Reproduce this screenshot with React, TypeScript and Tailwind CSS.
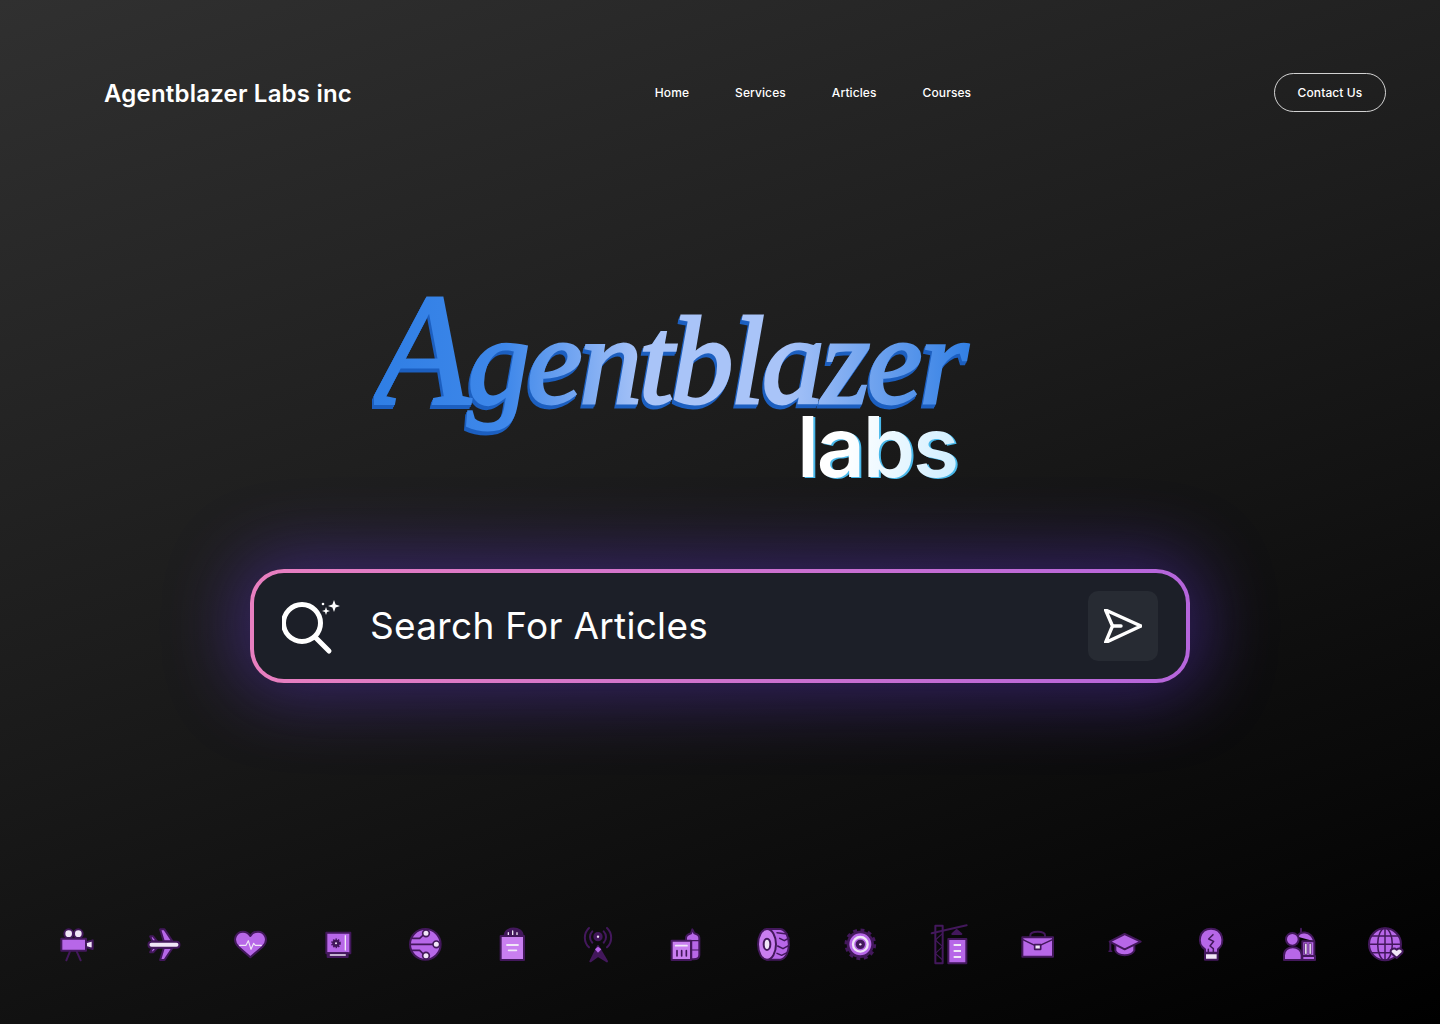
import type { ReactNode } from 'react';

const PURPLE = '#b767e8';
const LIGHT = '#c97ff0';
const DARK = '#43185c';
const WHITE = '#f0e6f7';

function Glyph({ x, children }: { x: number; children: ReactNode }) {
  return (
    <svg
      width="34"
      height="34"
      viewBox={`${x} 54 102 102`}
      fill={PURPLE}
      stroke={DARK}
      strokeWidth="6"
      strokeLinejoin="round"
      strokeLinecap="round"
      className="shrink-0 overflow-visible"
    >
      {children}
    </svg>
  );
}

const icons: ReactNode[] = [
  <Glyph x={60} key="camera">
    <circle cx="86" cy="71" r="13" fill={WHITE} />
    <circle cx="115" cy="71" r="13" fill={WHITE} />
    <rect x="64" y="86" width="74" height="36" />
    <path d="M138 97 L158 91 V117 L138 111 Z" fill={WHITE} />
    <path d="M90 124 L79 151 M110 124 L122 151" fill="none" />
  </Glyph>,
  <Glyph x={321.6} key="plane">
    <path d="M361 58 L374 58 L398 94 H372 Z" />
    <path d="M372 114 H398 L374 150 L361 150 Z" />
    <path d="M331 79 L340 79 L352 94 H338 Z" />
    <path d="M338 114 H352 L340 127 L331 127 Z" />
    <rect x="326" y="95" width="93" height="18" rx="9" fill={WHITE} />
  </Glyph>,
  <Glyph x={583} key="heart">
    <path d="M632 142 L596 110 C576 90 590 65 610 65 C621 65 628 71 632 78 C636 71 644 65 655 65 C675 65 689 90 669 110 Z" />
    <path d="M600 106 H619 L626 92 L634 118 L642 100 L647 106 H665" fill="none" stroke={WHITE} strokeWidth="3.5" />
  </Glyph>,
  <Glyph x={845} key="safe">
    <rect x="858" y="68" width="72" height="62" />
    <circle cx="887" cy="100" r="11" fill={DARK} stroke={DARK} strokeDasharray="4 3" strokeWidth="7" strokeLinecap="butt" />
    <circle cx="887" cy="100" r="3" fill={WHITE} stroke="none" />
    <path d="M915 77 V120" stroke={WHITE} strokeWidth="4" fill="none" />
    <rect x="862" y="130" width="60" height="11" fill={DARK} />
    <path d="M870 135 H915" stroke={WHITE} strokeWidth="4" fill="none" />
  </Glyph>,
  <Glyph x={86} key="circuit">
    <circle cx="135" cy="103" r="46" />
    <path d="M90 103 H160 M96 85 H118 L132 72 M96 121 H118 L132 135" fill="none" strokeWidth="5" />
    <circle cx="137" cy="70" r="10" fill={WHITE} strokeWidth="5" />
    <circle cx="168" cy="103" r="10" fill={WHITE} strokeWidth="5" />
    <circle cx="137" cy="137" r="10" fill={WHITE} strokeWidth="5" />
  </Glyph>,
  <Glyph x={348} key="bag">
    <path d="M374 78 C374 48 428 48 428 78" fill={DARK} />
    <path d="M385 76 V68 M398 76 V63 M411 76 V68" stroke={WHITE} strokeWidth="4" fill="none" />
    <rect x="362" y="78" width="70" height="72" fill={LIGHT} />
    <path d="M381 105 H414 M386 121 H409" stroke={WHITE} strokeWidth="5.5" fill="none" />
  </Glyph>,
  <Glyph x={610} key="tower">
    <path d="M638 98 A24 24 0 0 1 638 64 M672 64 A24 24 0 0 1 672 98 M628 112 A40 40 0 0 1 628 54 M682 54 A40 40 0 0 1 682 112" fill="none" />
    <circle cx="655" cy="80" r="11" fill={DARK} />
    <circle cx="655" cy="80" r="3.5" fill={WHITE} stroke="none" />
    <path d="M655 108 L632 154 L655 138 L682 154 Z" fill={DARK} />
    <path d="M655 110 L665 118 L655 128 L646 118 Z" stroke="none" />
  </Glyph>,
  <Glyph x={871} key="building">
    <path d="M919 148 V84 C919 74 928 72 934 70 L938 58 L944 70 C952 72 959 76 959 84 V135 C959 145 950 148 942 148 Z" />
    <path d="M919 92 H959 M936 92 V148 M936 120 H959" fill="none" strokeWidth="3.5" />
    <rect x="876" y="92" width="58" height="58" fill={LIGHT} />
    <path d="M888 107 H922" stroke={WHITE} strokeWidth="5" fill="none" />
    <path d="M892 122 V138 M906 122 V138 M920 122 V138" strokeWidth="5" fill="none" />
  </Glyph>,
  <Glyph x={113} key="tire">
    <path d="M140 57 H180 C214 62 214 144 180 149 H140 Z" />
    <path d="M170 68 L200 72 M178 85 L192 92 L206 84 M172 108 L188 116 L206 106 M170 130 L184 136 L200 128" fill="none" strokeWidth="4.5" />
    <ellipse cx="140" cy="103" rx="27" ry="46" fill={LIGHT} />
    <ellipse cx="140" cy="103" rx="10" ry="17" fill={WHITE} />
  </Glyph>,
  <Glyph x={374} key="gear">
    <circle cx="420" cy="103" r="41" fill={DARK} stroke={DARK} strokeWidth="13" strokeDasharray="11 10.4" strokeLinecap="butt" />
    <circle cx="420" cy="103" r="36" fill={PURPLE} />
    <circle cx="420" cy="103" r="22" fill="none" stroke={WHITE} strokeWidth="7" />
    <circle cx="420" cy="103" r="11" fill={DARK} />
    <circle cx="420" cy="103" r="3.5" fill={WHITE} stroke="none" />
  </Glyph>,
  <Glyph x={636} key="crane">
    <path d="M646 47 H668 V160 H646 Z" fill="none" />
    <path d="M646 90 L668 70 M668 110 L646 130 M646 90 L668 110 M668 150 L646 130" fill="none" strokeWidth="3.5" />
    <path d="M635 70 L740 46" fill="none" />
    <path d="M710 60 L697 72 H724 Z" fill={DARK} />
    <rect x="685" y="87" width="54" height="73" />
    <path d="M701 105 H723 M701 123 H723 M701 141 H723" stroke={WHITE} strokeWidth="6" fill="none" strokeLinecap="butt" />
  </Glyph>,
  <Glyph x={898} key="briefcase">
    <path d="M932 82 V76 C932 62 976 62 976 76 V82" fill="none" />
    <rect x="908" y="82" width="92" height="58" />
    <path d="M908 88 L953 110 L1000 88" fill="none" strokeWidth="4.5" />
    <rect x="945" y="104" width="18" height="14" fill={WHITE} strokeWidth="5" />
  </Glyph>,
  <Glyph x={139} key="cap">
    <path d="M167 104 V122 C175 140 215 140 224 122 V104 Z" />
    <path d="M195 72 L243 95 L195 118 L150 95 Z" />
    <path d="M152 96 V122" fill="none" />
    <path d="M148 124 H156" fill="none" strokeWidth="4.5" />
  </Glyph>,
  <Glyph x={401} key="bulb">
    <path d="M437 128 V118 C410 100 420 56 455 56 C490 56 500 100 476 118 V128 Z" />
    <path d="M461 74 L448 87 L463 94 L452 108 L462 116 V128 M447 128 V118" fill="none" strokeWidth="4.5" />
    <rect x="437" y="130" width="38" height="19" fill={WHITE} />
  </Glyph>,
  <Glyph x={662} key="person">
    <path d="M712 80 C714 62 752 60 762 94 H726 V150 H762 V94" fill={PURPLE} />
    <path d="M722 56 V66" fill="none" />
    <rect x="734" y="100" width="6" height="33" fill={WHITE} strokeWidth="2" />
    <rect x="747" y="100" width="6" height="33" fill={WHITE} strokeWidth="2" />
    <rect x="726" y="138" width="38" height="12" />
    <circle cx="696" cy="88" r="19" />
    <path d="M671 150 V136 C671 104 724 104 724 136 V150 Z" />
  </Glyph>,
  <Glyph x={924} key="globe">
    <circle cx="975" cy="103" r="48" />
    <ellipse cx="975" cy="103" rx="22" ry="48" fill="none" strokeWidth="4.5" />
    <path d="M975 55 V151 M927 103 H1023 M934 78 H1016 M934 128 H1016" fill="none" strokeWidth="4.5" />
    <path d="M1010 144 L993 128 C988 118 1002 112 1010 119 C1018 112 1032 118 1027 128 Z" fill={WHITE} />
  </Glyph>,
];

export default function App() {
  return (
    <div className="flex h-screen flex-col overflow-hidden bg-[linear-gradient(160deg,#303030_0%,#1c1c1c_45%,#000000_100%)] font-['Inter',sans-serif] text-white">
      <header className="flex items-center justify-between pl-[104px] pr-[54px] pt-[73px]">
        <a className="pt-[2px] text-[24px] font-semibold leading-none tracking-[0.2px]">Agentblazer Labs inc</a>
        <nav className="flex gap-[46px] text-[12px] font-medium tracking-[0.1px]">
          <a>Home</a>
          <a>Services</a>
          <a>Articles</a>
          <a>Courses</a>
        </nav>
        <button className="flex h-[39px] w-[112px] items-center justify-center rounded-full border border-white/80 text-[12px] font-medium tracking-[0.1px]">
          Contact Us
        </button>
      </header>

      <div className="ml-[374px] mt-[178px] flex h-[194px] w-[600px] flex-col">
        <div className="h-[170px] whitespace-nowrap bg-[linear-gradient(90deg,#2f7ee4_0%,#3f88ea_22%,#a9c4f8_45%,#a9c4f8_68%,#2f7ee4_100%)] bg-clip-text font-['Liberation_Serif',serif] text-[125px] font-normal italic leading-[120px] tracking-[-3px] text-transparent [-webkit-text-stroke:3px_transparent] [filter:drop-shadow(-1px_2px_0_#1c5fc0)_drop-shadow(-1px_2px_0_#1c5fc0)]">
          <span className="text-[158px] leading-[120px]">A</span>gentblazer
        </div>
        <div className="-mt-[47px] ml-[423px] w-fit bg-[linear-gradient(100deg,#ffffff_30%,#cfeeff_100%)] bg-clip-text text-[84px] font-semibold leading-[68px] tracking-[-2.2px] text-transparent [filter:drop-shadow(2px_1px_0_#48b8ea)]">
          labs
        </div>
      </div>

      <div className="mx-auto mt-[85px] h-[114px] w-[940px] rounded-[34px] bg-[linear-gradient(90deg,#e87fc0,#b565dc)] p-1 shadow-[0_0_70px_14px_rgba(96,52,210,0.42)]">
        <div className="flex h-full items-center rounded-[30px] bg-[#1c1f28] pl-[28px] pr-[28px]">
          <svg width="58" height="58" viewBox="0 0 58 58" fill="none" className="shrink-0">
            <circle cx="20" cy="26" r="18.5" stroke="white" strokeWidth="5" />
            <path d="M33 40 L47 54" stroke="white" strokeWidth="5" strokeLinecap="round" />
            <path d="M52 3 L53.6 7.4 L58 9 L53.6 10.6 L52 15 L50.4 10.6 L46 9 L50.4 7.4 Z" fill="white" />
            <path d="M44 10 L45 13 L48 14 L45 15 L44 18 L43 15 L40 14 L43 13 Z" fill="white" />
            <circle cx="41" cy="7" r="1.3" fill="white" />
          </svg>
          <span className="ml-[30px] text-[37px] font-normal tracking-[0.3px] text-white">Search For Articles</span>
          <button className="ml-auto flex h-[70px] w-[70px] items-center justify-center rounded-[10px] bg-[#272b33]">
            <svg width="38" height="34" viewBox="0 0 38 34" fill="none">
              <path d="M1.5 1 L37 17 L1.5 33.5 L8.5 17 Z" stroke="white" strokeWidth="3.4" strokeLinejoin="round" />
              <path d="M8.5 17 H17" stroke="white" strokeWidth="3.4" strokeLinecap="round" />
            </svg>
          </button>
        </div>
      </div>

      <div className="mt-[245px] flex justify-between pl-[60px] pr-[38px]">{icons}</div>
    </div>
  );
}
